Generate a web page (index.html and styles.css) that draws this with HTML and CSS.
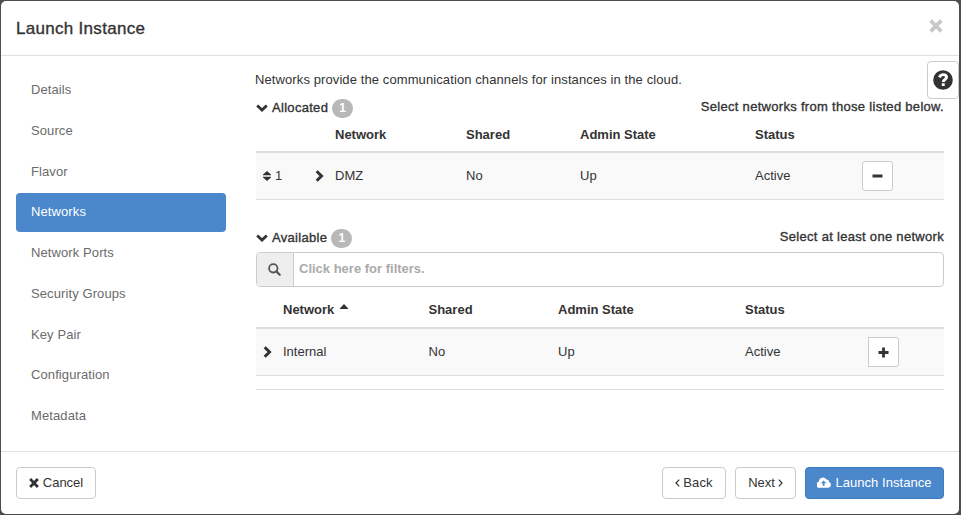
FILE: index.html
```
<!DOCTYPE html>
<html lang="en">
<head>
<meta charset="utf-8">
<title>Launch Instance</title>
<link rel="stylesheet" href="styles.css">
</head>
<body>
<div class="modal">
  <header class="modal-header">
    <h1 class="medium">Launch Instance</h1>
    <button class="close" aria-label="Close"><svg width="14" height="14" viewBox="0 0 14 14"><path d="M3 3l8 8M11 3l-8 8" stroke="currentColor" stroke-width="3.8" stroke-linecap="square"/></svg></button>
  </header>
  <div class="modal-body">
    <nav class="steps">
      <a>Details</a>
      <a>Source</a>
      <a>Flavor</a>
      <a class="active">Networks</a>
      <a>Network Ports</a>
      <a>Security Groups</a>
      <a>Key Pair</a>
      <a>Configuration</a>
      <a>Metadata</a>
    </nav>
    <main class="content">
      <p class="intro">Networks provide the communication channels for instances in the cloud.</p>
      <div class="section-title allocated-title">
        <svg width="12" height="8" viewBox="0 0 12 8"><path d="M1.2 1.4L6 6l4.8-4.6" fill="none" stroke="currentColor" stroke-width="2.8"/></svg>
        <span class="medium name">Allocated</span><span class="badge">1</span>
        <span class="medium hint">Select networks from those listed below.</span>
      </div>
      <div class="table allocated">
        <div class="row head"><span></span><span></span><span>Network</span><span>Shared</span><span>Admin State</span><span>Status</span><span></span></div>
        <div class="row data">
          <span class="order"><svg width="8" height="10" viewBox="0 0 8 10"><path d="M4 0l4 3.6v.7H0v-.7zM4 10l4-3.6v-.7H0v.7z" fill="currentColor"/></svg>1</span>
          <span class="expand"><svg width="9" height="12" viewBox="0 0 9 12"><path d="M1.7 1.2L6.5 6l-4.8 4.8" fill="none" stroke="currentColor" stroke-width="3"/></svg></span>
          <span>DMZ</span><span>No</span><span>Up</span><span>Active</span>
          <button class="action" aria-label="Remove"><svg width="11" height="11" viewBox="0 0 11 11"><path d="M.5 5h10" stroke="currentColor" stroke-width="3"/></svg></button>
        </div>
      </div>
      <div class="section-title available-title">
        <svg width="12" height="8" viewBox="0 0 12 8"><path d="M1.2 1.4L6 6l4.8-4.6" fill="none" stroke="currentColor" stroke-width="2.8"/></svg>
        <span class="medium name">Available</span><span class="badge">1</span>
        <span class="medium hint">Select at least one network</span>
      </div>
      <div class="search">
        <span class="addon"><svg width="13" height="13" viewBox="0 0 13 13"><circle cx="5.3" cy="5.3" r="4.2" fill="none" stroke="currentColor" stroke-width="1.8"/><path d="M8.4 8.4l3.3 3.3" stroke="currentColor" stroke-width="2.2" stroke-linecap="round"/></svg></span>
        <span class="placeholder">Click here for filters.</span>
      </div>
      <div class="table available">
        <div class="row head"><span></span><span>Network <svg class="sorted" width="8" height="5" viewBox="0 0 8 5"><path d="M4 0l4 4.2v.8H0v-.8z" fill="currentColor"/></svg></span><span>Shared</span><span>Admin State</span><span>Status</span><span></span></div>
        <div class="row data">
          <span class="expand"><svg width="9" height="12" viewBox="0 0 9 12"><path d="M1.7 1.2L6.5 6l-4.8 4.8" fill="none" stroke="currentColor" stroke-width="3"/></svg></span>
          <span>Internal</span><span>No</span><span>Up</span><span>Active</span>
          <button class="action add" aria-label="Add"><svg width="11" height="11" viewBox="0 0 11 11"><path d="M.5 5.5h10M5.5 .5v10" stroke="currentColor" stroke-width="2.8"/></svg></button>
        </div>
      </div>
      <div class="table-end"></div>
    </main>
  </div>
  <footer class="modal-footer">
    <button class="btn cancel"><svg width="10" height="10" viewBox="0 0 10 10"><path d="M2.1 2.1l5.8 5.8M7.9 2.1l-5.8 5.8" stroke="currentColor" stroke-width="2.8" stroke-linecap="square"/></svg><span>Cancel</span></button>
    <button class="btn back"><svg width="5" height="8" viewBox="0 0 5 8"><path d="M4.2 .7L1 4l3.2 3.3" fill="none" stroke="currentColor" stroke-width="1.2"/></svg><span>Back</span></button>
    <button class="btn next"><span>Next</span><svg width="5" height="8" viewBox="0 0 5 8"><path d="M.8 .7L4 4 .8 7.3" fill="none" stroke="currentColor" stroke-width="1.2"/></svg></button>
    <button class="btn primary"><svg width="14" height="11" viewBox="0 0 14 11"><path d="M3.2 10.8A3.1 3.1 0 0 1 2 4.6 3.9 3.9 0 0 1 9.3 2.6 2.1 2.1 0 0 1 12 5 3 3 0 0 1 11.2 10.8z" fill="currentColor"/><path d="M6.6 3.4L3.9 6.2h1.8v2.5h1.8V6.2h1.8z" fill="#4a87cb"/></svg><span>Launch Instance</span></button>
  </footer>
  <button class="help" aria-label="Help"><svg width="20" height="20" viewBox="0 0 20 20"><circle cx="10" cy="10" r="9.8" fill="currentColor"/><path d="M6.4 7.4Q7.5 4.6 10.2 4.6c1.9 0 3.3 1.1 3.3 2.7 0 2.3-3.2 2.1-3.2 4.6" fill="none" stroke="#fff" stroke-width="2.9"/><path d="M8.8 13.2h2.9v2.8H8.8z" fill="#fff"/></svg></button>
</div>
</body>
</html>
```
FILE: styles.css
```
* { box-sizing: border-box; }
html, body { height: 100%; }
body {
  margin: 0;
  padding: 1px 2px 1px 1px;
  background: #4d4d4f;
  color: #333;
  font: 13px/18px "Liberation Sans", Arial, sans-serif;
  overflow: hidden;
}
button { font: inherit; color: inherit; }
svg { display: block; flex: none; }
.modal {
  position: relative;
  height: 513px;
  display: flex;
  flex-direction: column;
  background: #fff;
  border-radius: 5px;
}
.modal-header {
  height: 55px;
  flex: none;
  display: flex;
  justify-content: space-between;
  padding: 0 16px 0 15px;
  border-bottom: 1px solid #e0e0e0;
}
.medium { -webkit-text-stroke: .35px currentColor; letter-spacing: .3px; }
h1 { margin: 17px 0 0; font-size: 17px; line-height: 22px; font-weight: 400; }
.close { border: 0; background: none; padding: 0; height: 14px; margin: 18px 0 0; color: #c8c8c8; }
.modal-body { flex: 1; display: flex; min-height: 0; }
.steps { width: 225px; padding: 15px 0 0 15px; }
.steps a {
  display: block;
  height: 38.75px;
  margin-bottom: 2px;
  padding: 0 15px;
  line-height: 37px;
  letter-spacing: .1px;
  color: #6b6b6b;
  border-radius: 4px;
}
.steps .active { background: #4a87cb; color: #fff; }
.content { flex: 1; padding: 15px 15px 0 30px; }
.intro { margin: 0 0 0 -1px; height: 18px; letter-spacing: .1px; }
.section-title { display: flex; height: 20px; align-items: center; }
.allocated-title { margin-top: 9px; }
.available-title { margin-top: 28px; }
.name { margin-left: 4px; }
.badge {
  width: 21px;
  height: 19px;
  margin-left: 4px;
  border-radius: 10px;
  background: #b8b8b8;
  color: #fff;
  font-weight: 700;
  font-size: 12px;
  line-height: 19px;
  text-align: center;
}
.hint { margin-left: auto; margin-top: -2px; }
.row { display: grid; align-items: center; }
.allocated .row { grid-template-columns: 59px 20px 131px 114px 175px 107px 1fr; }
.available .row { grid-template-columns: 27px 145.5px 129.5px 187px 123px 1fr; }
.head { height: 35px; font-weight: 700; border-bottom: 2px solid #ddd; }
.data { height: 47px; background: #f9f9f9; border-bottom: 1px solid #ddd; }
.order { display: flex; align-items: center; gap: 4px; padding-left: 7px; }
.available .expand { padding-left: 7px; }
.action {
  width: 31px;
  height: 30px;
  padding: 0;
  display: flex;
  align-items: center;
  justify-content: center;
  background: #fff;
  border: 1px solid #ccc;
  border-radius: 3px;
}
.add { border-radius: 0 3px 3px 0; }
.search { height: 35px; margin-top: 4px; display: flex; border: 1px solid #ccc; border-radius: 4px; }
.addon {
  width: 37px;
  padding-right: 1px;
  display: flex;
  align-items: center;
  justify-content: center;
  background: #eee;
  border-right: 1px solid #ccc;
  border-radius: 3px 0 0 3px;
  color: #555;
}
.placeholder { padding-left: 5px; line-height: 32px; font-weight: 700; color: #aaa; }
.available .head { height: 42px; padding-top: 5px; }
.sorted { display: inline-block; margin-left: 2px; vertical-align: 5px; }
.table-end { margin-top: 13px; border-top: 1px solid #ddd; }
.modal-footer {
  height: 63px;
  flex: none;
  display: flex;
  gap: 9px;
  padding: 15px 15px 0 15px;
  border-top: 1px solid #e0e0e0;
}
.btn {
  height: 32px;
  padding: 0 0 1px;
  display: flex;
  align-items: center;
  justify-content: center;
  gap: 4px;
  background: #fff;
  border: 1px solid #ccc;
  border-radius: 4px;
}
.cancel { width: 80px; margin-right: auto; }
.back { width: 64px; gap: 3px; letter-spacing: .1px; }
.next { width: 61px; gap: 3px; }
.primary { width: 139px; background: #4a87cb; border-color: #3b7bc2; color: #fff; letter-spacing: .05px; }
.help {
  position: absolute;
  top: 60px;
  right: 0;
  width: 32px;
  height: 38px;
  padding: 0 1px 0 0;
  display: flex;
  align-items: center;
  justify-content: center;
  background: #fff;
  border: 1px solid #ccc;
  border-radius: 4px;
}
```
